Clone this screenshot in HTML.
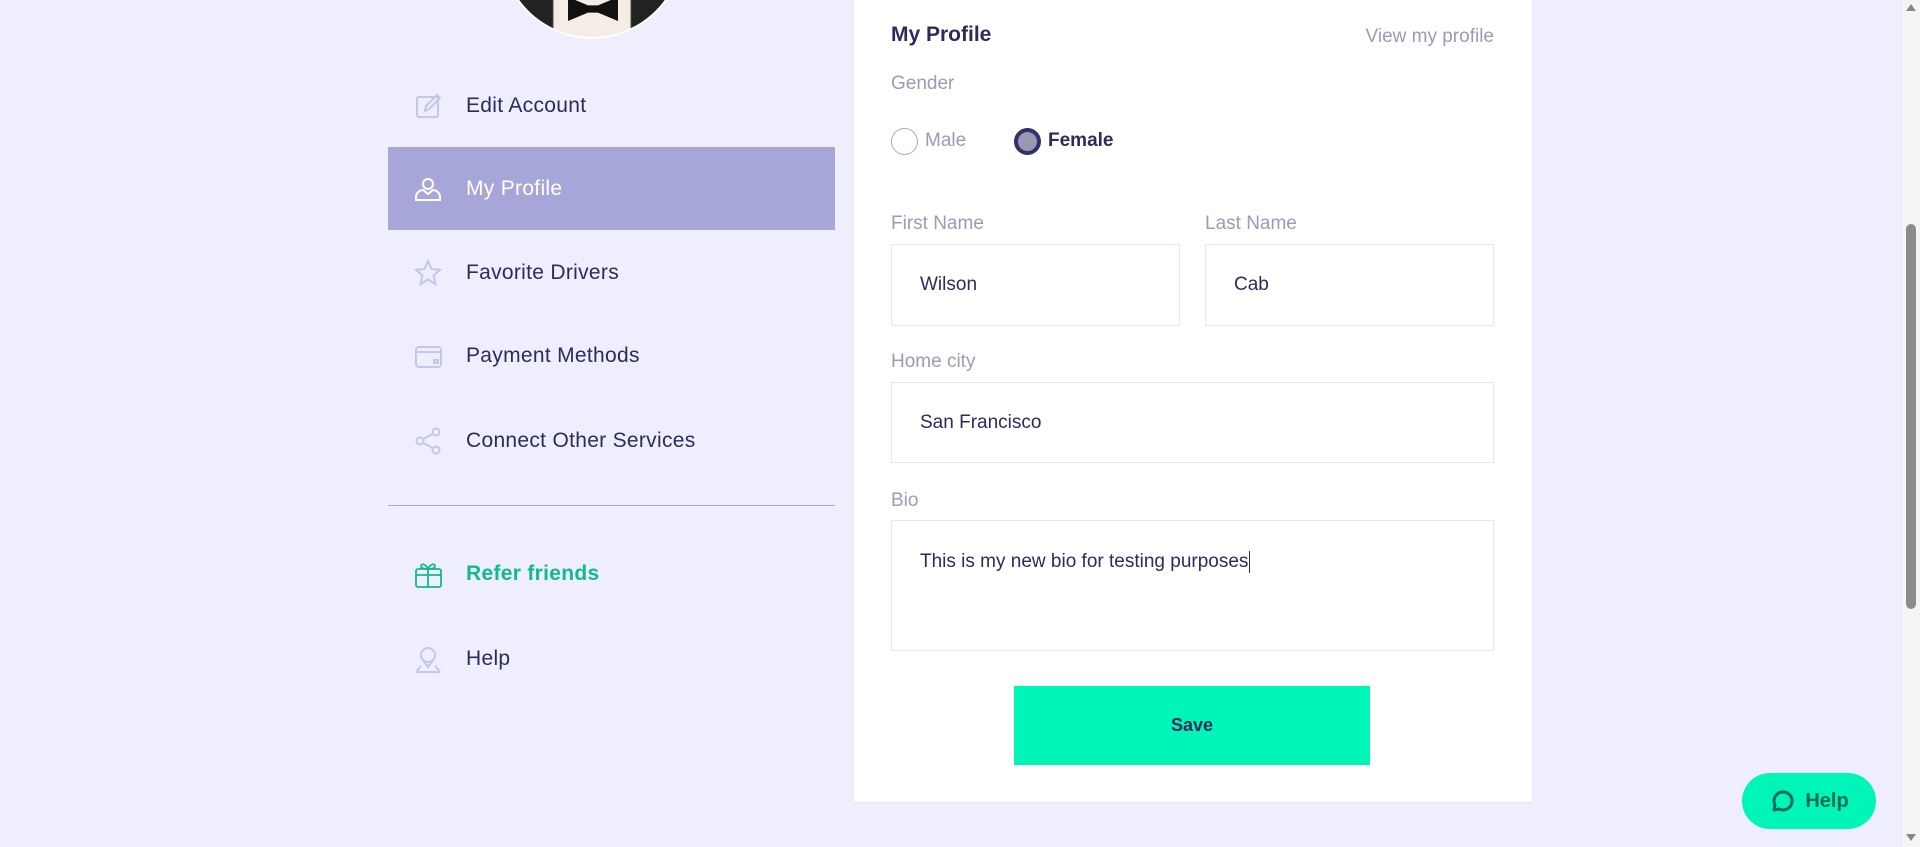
<!DOCTYPE html>
<html><head><meta charset="utf-8"><style>
*{box-sizing:border-box;margin:0;padding:0}
body{width:1920px;height:847px;overflow:hidden;background:#efeeff;font-family:"Liberation Sans",sans-serif;color:#2d2b5c;position:relative}
.av{position:absolute;left:500px;top:-145px;width:184px;height:184px;border-radius:50%;background:linear-gradient(90deg,#222 0 28%,#f3ede6 29% 71%,#222 72%);border:2px solid #fff;overflow:hidden}
.bt{position:absolute;left:66px;top:140px;width:50px;height:24px;background:#111;clip-path:polygon(0 0,40% 35%,60% 35%,100% 0,100% 100%,60% 65%,40% 65%,0 100%)}
.menu{position:absolute;left:388px;width:447px}
.item{position:absolute;left:0;width:447px;height:83px;display:flex;align-items:center;font-size:21px;letter-spacing:.3px}
.item svg{position:absolute;left:26px;width:28px;height:28px}
.item span{position:absolute;left:78px}
.sel{background:#a6a6d9;color:#fff}
.div{position:absolute;left:388px;top:505px;width:447px;height:1px;background:#a6a6d9}
.card{position:absolute;left:854px;top:-10px;width:678px;height:812px;background:#fff;box-shadow:0 1px 2px rgba(0,0,0,.06)}
.t{position:absolute;font-size:19px;color:#9d9bb3}
.in{position:absolute;border:1px solid #e6e5fa;font-size:19px;color:#2d2b5c;padding-left:28px;display:flex;align-items:center}
.scroll{position:absolute;left:1902px;top:0;width:18px;height:847px;background:#f4f4f4}
</style></head><body>
<div class="av"><div class="bt"></div></div>
<div class="item" style="top:64px;left:388px"><svg viewBox="0 0 28 28" fill="none" stroke="#c6c5ec" stroke-width="2"><rect x="3" y="5" width="21" height="20" rx="2"/><path d="M11 19l1-5 11-11 3 3-11 11z"/></svg><span>Edit Account</span></div>
<div class="item sel" style="top:147px;left:388px"><svg viewBox="0 0 28 28" fill="none" stroke="#fff" stroke-width="2"><circle cx="14" cy="9" r="5"/><path d="M2 25v-3c0-4 4-7 7-7l5 4 5-4c3 0 7 3 7 7v3z"/></svg><span>My Profile</span></div>
<div class="item" style="top:231px;left:388px"><svg viewBox="0 0 28 28" fill="none" stroke="#c6c5ec" stroke-width="2"><path d="M14 2l3.5 8 8.5.8-6.5 5.8 2 8.4L14 20.5 6.5 25l2-8.4L2 10.8l8.5-.8z"/></svg><span>Favorite Drivers</span></div>
<div class="item" style="top:314px;left:388px"><svg viewBox="0 0 28 28" fill="none" stroke="#c6c5ec" stroke-width="2"><rect x="2" y="5" width="25" height="20" rx="3"/><path d="M2 10h25"/><rect x="20" y="18" width="4" height="3"/></svg><span>Payment Methods</span></div>
<div class="item" style="top:399px;left:388px"><svg viewBox="0 0 28 28" fill="none" stroke="#c6c5ec" stroke-width="2"><circle cx="22" cy="5" r="3.5"/><circle cx="6" cy="14" r="3.5"/><circle cx="22" cy="23" r="3.5"/><path d="M9 12l10-5M9 16l10 5"/></svg><span>Connect Other Services</span></div>
<div class="div"></div>
<div class="item" style="top:532px;left:388px;color:#12b98b;font-weight:bold"><svg viewBox="0 0 28 28" fill="none" stroke="#12b98b" stroke-width="1.8"><rect x="2" y="9" width="25" height="18" rx="2"/><path d="M2 15h25M14 9v18M14 9c-2-5-7-6-7-3s5 3 7 3c2 0 7 0 7-3s-5-2-7 3"/></svg><span>Refer friends</span></div>
<div class="item" style="top:617px;left:388px"><svg viewBox="0 0 28 28" fill="none" stroke="#c6c5ec" stroke-width="2"><circle cx="14" cy="10" r="7"/><path d="M9 15l5 7 5-7M2 27l5-6M26 27l-5-6M2 27h24"/></svg><span>Help</span></div>
<div class="card"></div>
<div class="t" style="left:891px;top:23px;font-size:21px;font-weight:bold;color:#2d2b5c">My Profile</div>
<div class="t" style="left:1350px;top:26px;width:144px;text-align:right">View my profile</div>
<div class="t" style="left:891px;top:73px">Gender</div>
<div style="position:absolute;left:891px;top:128px;width:27px;height:27px;border:1.5px solid #a9a8c2;border-radius:50%"></div>
<div class="t" style="left:925px;top:130px">Male</div>
<div style="position:absolute;left:1014px;top:128px;width:27px;height:27px;border:4px solid #34306a;background:#9898b4;border-radius:50%"></div>
<div class="t" style="left:1048px;top:130px;color:#2d2b5c;font-weight:bold">Female</div>
<div class="t" style="left:891px;top:213px">First Name</div>
<div class="t" style="left:1205px;top:213px">Last Name</div>
<div class="in" style="left:891px;top:244px;width:289px;height:82px">Wilson</div>
<div class="in" style="left:1205px;top:244px;width:289px;height:82px">Cab</div>
<div class="t" style="left:891px;top:351px">Home city</div>
<div class="in" style="left:891px;top:382px;width:603px;height:81px">San Francisco</div>
<div class="t" style="left:891px;top:490px">Bio</div>
<div class="in" style="left:891px;top:520px;width:603px;height:131px;align-items:flex-start;padding-top:30px">This is my new bio for testing purposes<span style="border-left:1px solid #2d2b5c;height:22px;margin-left:1px"></span></div>
<div style="position:absolute;left:1014px;top:686px;width:356px;height:79px;background:#00f5b8;display:flex;align-items:center;justify-content:center;font-weight:bold;font-size:18px;color:#2d2b5c">Save</div>
<div style="position:absolute;left:1742px;top:773px;width:134px;height:56px;border-radius:28px;background:#00f5b8;display:flex;align-items:center;justify-content:center;gap:10px;font-weight:bold;font-size:20px;color:#0d6b55"><svg width="26" height="26" viewBox="0 0 26 26" fill="none" stroke="#0d6b55" stroke-width="3"><path d="M5 22l1-5a9 9 0 1 1 4 4z" stroke-linejoin="round"/></svg>Help</div>
<div class="scroll"><div style="position:absolute;left:4px;top:224px;width:10px;height:385px;background:#8b8b8b;border-radius:5px"></div>
<div style="position:absolute;left:4px;top:4px;border:5px solid transparent;border-bottom:7px solid #888;border-top:0"></div>
<div style="position:absolute;left:4px;top:834px;border:5px solid transparent;border-top:7px solid #888;border-bottom:0"></div></div>
</body></html>
